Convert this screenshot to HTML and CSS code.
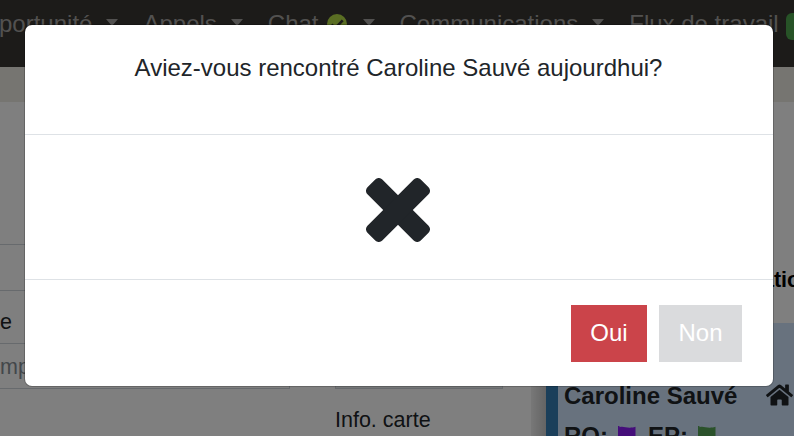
FILE: index.html
```html
<!DOCTYPE html>
<html lang="fr">
<head>
  <meta charset="UTF-8">
  <title>Rencontre</title>
  <link rel="stylesheet" href="styles.css">
</head>
<body>
  <nav class="navbar">
    <a class="nav-item">Opportunité <i class="caret"></i></a>
    <a class="nav-item">Appels <i class="caret"></i></a>
    <a class="nav-item nav-chat">Chat
      <svg class="check" viewBox="0 0 20 20"><circle cx="10" cy="10" r="10" fill="#b4dc46"/><path d="M4.5 10.5l3.7 3.7 7.5-7.8" fill="none" stroke="#383632" stroke-width="2.6"/></svg>
      <i class="caret"></i></a>
    <a class="nav-item">Communications <i class="caret"></i></a>
    <a class="nav-item">Flux de travail</a>
    <span class="nav-badge"></span>
  </nav>
  <div class="strip"></div>
  <div class="content">
    <div class="form-col">
      <div class="field field-top"></div>
      <label class="label">e</label>
      <div class="field placeholder">mploi</div>
    </div>
    <div class="card-col">
      <div class="field select"></div>
      <label class="label">Info. carte</label>
    </div>
    <div class="side-col">
      <div class="side-title">ation</div>
      <div class="client">
        <div class="client-name">Caroline Sauvé
          <svg class="home" viewBox="0 0 576 512"><path d="M280.37 148.26L96 300.11V464a16 16 0 0 0 16 16l112.06-.29a16 16 0 0 0 15.92-16V368a16 16 0 0 1 16-16h64a16 16 0 0 1 16 16v95.64a16 16 0 0 0 16 16.05L464 480a16 16 0 0 0 16-16V300L295.67 148.26a12.19 12.19 0 0 0-15.3 0zM571.6 251.47L488 182.56V44.05a12 12 0 0 0-12-12h-56a12 12 0 0 0-12 12v72.61L318.47 43a48 48 0 0 0-61 0L4.34 251.47a12 12 0 0 0-1.6 16.9l25.5 31A12 12 0 0 0 45.15 301l235.22-193.74a12.19 12.19 0 0 1 15.3 0L530.9 301a12 12 0 0 0 16.9-1.6l25.5-31a12 12 0 0 0-1.7-16.93z"/></svg>
        </div>
        <div class="client-flags">
          <span>RO:</span>
          <svg class="flag purple" viewBox="0 0 18 20"><path d="M0 0h1.5v1.2C6-.6 9 3.4 17.5.8v11.4C10 15 6 11 1.5 13v7H0z"/></svg>
          <span>EP:</span>
          <svg class="flag green" viewBox="0 0 18 20"><path d="M0 0h1.5v1.2C6-.6 9 3.4 17.5.8v11.4C10 15 6 11 1.5 13v7H0z"/></svg>
        </div>
      </div>
    </div>
  </div>

  <div class="backdrop">
    <div class="modal">
      <div class="modal-header">Aviez-vous rencontré Caroline Sauvé aujourdhui?</div>
      <div class="modal-body">
        <svg class="cross" viewBox="-32 -32 64 64">
          <rect x="-37.7" y="-10.5" width="75.4" height="21" rx="5" transform="rotate(45)"/>
          <rect x="-37.7" y="-10.5" width="75.4" height="21" rx="5" transform="rotate(-45)"/>
        </svg>
      </div>
      <div class="modal-footer">
        <button class="btn btn-yes">Oui</button>
        <button class="btn btn-no">Non</button>
      </div>
    </div>
  </div>
</body>
</html>
```
FILE: styles.css
```css
* {
  box-sizing: border-box;
}
body {
  margin: 0;
  height: 436px;
  overflow: hidden;
  font-family: "Liberation Sans", Arial, sans-serif;
  font-size: 24px;
  color: #212529;
  background: #fff;
}
.navbar {
  display: flex;
  height: 67px;
  padding-top: 10px;
  background: #383632;
  color: #a5a3a0;
  white-space: nowrap;
}
.nav-item {
  display: flex;
  flex: none;
  height: 28px;
  align-items: center;
  margin-right: 25px;
}
.nav-item:first-child {
  margin-left: -33px;
}
.nav-item:nth-child(5) {
  margin-right: 7px;
}
.caret {
  margin: 0 0 3px 14px;
  border: 6.5px solid transparent;
  border-top: 7px solid #a5a3a0;
  border-bottom: 0;
}
.check {
  width: 20px;
  height: 20px;
  margin-left: 8px;
}
.nav-chat .caret {
  margin-left: 16px;
}
.nav-badge {
  flex: none;
  width: 40px;
  height: 27px;
  margin-top: 3px;
  border-radius: 6px;
  background: #4ea64e;
}
.strip {
  height: 35px;
  background: #eceae2;
}
.content {
  display: flex;
  height: 334px;
  font-size: 21.5px;
}
.form-col {
  flex: none;
  width: 290px;
  padding-top: 142px;
}
.field {
  height: 46px;
  border: 1px solid #ced4da;
  border-left: 0;
}
.field-top {
  height: 47px;
}
.label {
  display: block;
  height: 52px;
  line-height: 62px;
}
.placeholder {
  line-height: 47px;
  color: #868e96;
}
.card-col {
  flex: none;
  width: 168px;
  margin-left: 45px;
  padding-top: 241px;
}
.select {
  border: 1px solid #ced4da;
  background: #e9ecef;
}
.side-col {
  flex: none;
  width: 263px;
  margin-left: 28px;
  padding-left: 15px;
  background: linear-gradient(to right, #f0f0f0, #c8c8c8 15px, #fff 15px);
}
.side-title {
  height: 221px;
  padding: 166px 0 0 216px;
  font-weight: bold;
  color: #000;
}
.client {
  height: 113px;
  padding: 59px 0 0 6px;
  border-left: 12px solid #367eb4;
  background: #d0e4fc;
  font-size: 24px;
  font-weight: bold;
  white-space: nowrap;
}
.client-name {
  display: flex;
  height: 40px;
  align-items: flex-start;
  line-height: 28px;
}
.home {
  flex: none;
  width: 27px;
  height: 24px;
  margin: 1px 0 0 29px;
  fill: #212529;
}
.client-flags {
  display: flex;
  line-height: 28px;
}
.flag {
  width: 18px;
  height: 20px;
  margin: 4px 12px 0 10px;
}
.purple {
  fill: #8a1cf5;
}
.green {
  fill: #56a556;
}
.backdrop {
  position: absolute;
  inset: 0;
  padding: 25px;
  background: rgba(0, 0, 0, 0.5);
}
.modal {
  width: 748px;
  height: 361px;
  border-radius: 7px;
  background: #fff;
  box-shadow: 0 0 0 1px rgba(0, 0, 0, 0.2);
}
.modal-header {
  height: 110px;
  padding: 29px 1px 0 0;
  border-bottom: 1px solid #dee2e6;
  line-height: 28px;
  text-align: center;
}
.modal-body {
  display: flex;
  height: 144px;
  padding: 43px 2px 0 0;
  justify-content: center;
}
.cross {
  width: 64px;
  height: 64px;
  fill: #212529;
}
.modal-footer {
  display: flex;
  height: 107px;
  padding: 25px 31px 0 0;
  border-top: 1px solid #dee2e6;
  justify-content: flex-end;
  gap: 12px;
}
.btn {
  height: 57px;
  padding: 0 0 2px;
  border: 0;
  color: #fff;
  font: 24px "Liberation Sans", Arial, sans-serif;
}
.btn-yes {
  width: 76px;
  background: #cb444a;
}
.btn-no {
  width: 83px;
  background: #dadbdd;
}
```
